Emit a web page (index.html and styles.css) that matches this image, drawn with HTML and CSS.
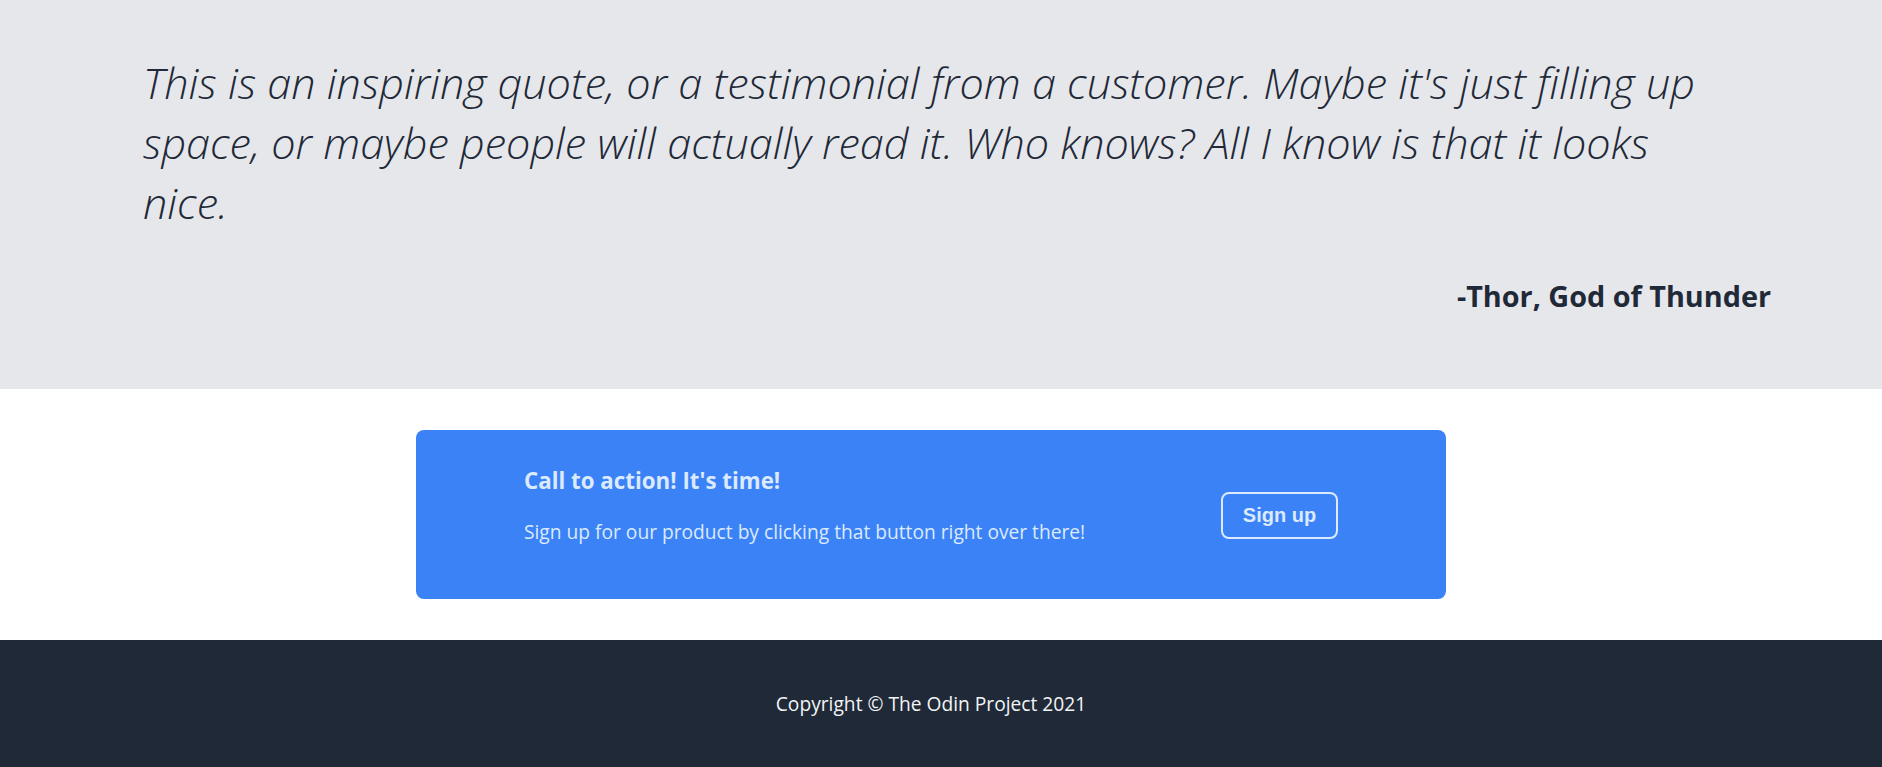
FILE: index.html
```html
<!DOCTYPE html>
<html lang="en">
<head>
<meta charset="utf-8">
<title>Odin Landing Page</title>
<link rel="stylesheet" href="styles.css">
</head>
<body>
  <section class="quote-section">
    <p class="quote">This is an inspiring quote, or a testimonial from a customer. Maybe it's just filling up space, or maybe people will actually read it. Who knows? All I know is that it looks nice.</p>
    <p class="author">-Thor, God of Thunder</p>
  </section>
  <section class="cta-section">
    <div class="cta">
      <div class="cta-text">
        <h3 class="cta-title">Call to action! It's time!</h3>
        <p class="cta-sub">Sign up for our product by clicking that button right over there!</p>
      </div>
      <button class="cta-button" type="button">Sign up</button>
    </div>
  </section>
  <footer class="footer">
    <p class="copyright">Copyright © The Odin Project 2021</p>
  </footer>
</body>
</html>
```

FILE: styles.css
```css
* {
  box-sizing: border-box;
}

html, body {
  margin: 0;
  padding: 0;
}

body {
  font-family: "Open Sans", "Noto Sans", sans-serif;
  color: #1f2937;
  background: #ffffff;
}

.quote-section {
  background: #e5e7eb;
  height: 389px;
  padding: 53px 111px 0 143px;
  display: flex;
  flex-direction: column;
}

.quote {
  margin: 0;
  max-width: 1570px;
  font-size: 43.2px;
  font-weight: 300;
  font-style: italic;
  line-height: 60px;
  color: #1f2937;
}

.author {
  margin: 45px 0 0;
  align-self: flex-end;
  font-size: 28.8px;
  font-weight: 700;
  line-height: 36px;
  color: #1f2937;
}

.cta-section {
  height: 251px;
  padding: 41px 20px 0 0;
  display: flex;
  justify-content: center;
  align-items: flex-start;
}

.cta {
  width: 1030px;
  height: 169px;
  background: #3b82f6;
  border-radius: 8px;
  padding: 0 108px;
  display: flex;
  align-items: center;
  justify-content: space-between;
  color: #dbeafe;
}

.cta-text {
  padding-bottom: 17px;
}

.cta-title {
  margin: 0;
  font-size: 22.3px;
  font-weight: 700;
  line-height: 28px;
}

.cta-sub {
  margin: 23px 0 0;
  font-size: 19.2px;
  line-height: 28px;
}

.cta-button {
  font-family: "Liberation Sans", Arial, sans-serif;
  font-size: 20px;
  font-weight: 700;
  line-height: 23px;
  color: #dbeafe;
  background: transparent;
  border: 2px solid #dbeafe;
  border-radius: 8px;
  padding: 0;
  width: 117px;
  height: 47px;
  white-space: nowrap;
  display: flex;
  align-items: center;
  justify-content: center;
  margin-top: 2px;
}

.footer {
  background: #1f2937;
  height: 127px;
  padding-right: 20px;
  display: flex;
  align-items: center;
  justify-content: center;
}

.copyright {
  margin: 0;
  font-size: 19.2px;
  color: #f3f4f6;
}
```
